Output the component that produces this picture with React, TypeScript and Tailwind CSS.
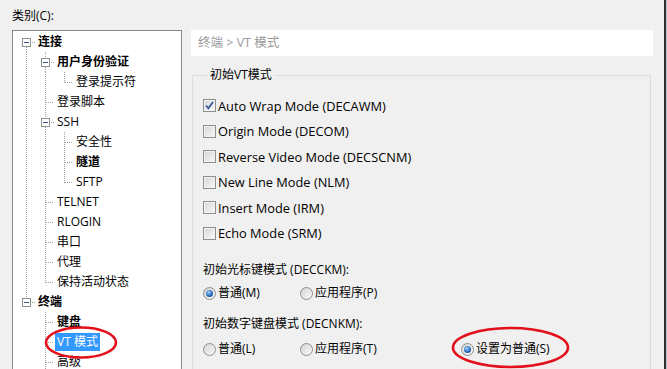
import React from 'react';

const FONT = { fontFamily: '"Open Sans", "Noto Sans CJK SC", sans-serif' };

type Kind = 'box' | 'tee' | 'elbow';

interface TreeNode {
  label: string;
  level: number;
  kind: Kind;
  guides: boolean[];
  up?: boolean;
  down?: boolean;
  bold?: boolean;
  selected?: boolean;
}

const nodes: TreeNode[] = [
  { label: '连接', level: 0, kind: 'box', guides: [], down: true, bold: true },
  { label: '用户身份验证', level: 1, kind: 'box', guides: [true], up: true, down: true, bold: true },
  { label: '登录提示符', level: 2, kind: 'elbow', guides: [true, true] },
  { label: '登录脚本', level: 1, kind: 'tee', guides: [true] },
  { label: 'SSH', level: 1, kind: 'box', guides: [true], up: true, down: true },
  { label: '安全性', level: 2, kind: 'tee', guides: [true, true] },
  { label: '隧道', level: 2, kind: 'tee', guides: [true, true], bold: true },
  { label: 'SFTP', level: 2, kind: 'elbow', guides: [true, true] },
  { label: 'TELNET', level: 1, kind: 'tee', guides: [true] },
  { label: 'RLOGIN', level: 1, kind: 'tee', guides: [true] },
  { label: '串口', level: 1, kind: 'tee', guides: [true] },
  { label: '代理', level: 1, kind: 'tee', guides: [true] },
  { label: '保持活动状态', level: 1, kind: 'elbow', guides: [true] },
  { label: '终端', level: 0, kind: 'box', guides: [], up: true, bold: true },
  { label: '键盘', level: 1, kind: 'tee', guides: [false], bold: true },
  { label: 'VT 模式', level: 1, kind: 'tee', guides: [false], selected: true },
  { label: '高级', level: 1, kind: 'tee', guides: [false] },
];

const DOT = '#a0a0a0';

function Cell({ kind, guide, up, down }: { kind?: Kind; guide?: boolean; up?: boolean; down?: boolean }) {
  return (
    <svg width="19" height="20" className="shrink-0" shapeRendering="crispEdges">
      {guide && <line x1="9.5" y1="0" x2="9.5" y2="20" stroke={DOT} strokeDasharray="1 1" />}
      {kind === 'tee' && <line x1="9.5" y1="0" x2="9.5" y2="20" stroke={DOT} strokeDasharray="1 1" />}
      {kind === 'elbow' && <line x1="9.5" y1="0" x2="9.5" y2="11" stroke={DOT} strokeDasharray="1 1" />}
      {(kind === 'tee' || kind === 'elbow') && (
        <line x1="10" y1="10.5" x2="18" y2="10.5" stroke={DOT} strokeDasharray="1 1" />
      )}
      {kind === 'box' && (
        <>
          {up && <line x1="9.5" y1="0" x2="9.5" y2="6" stroke={DOT} strokeDasharray="1 1" />}
          {down && <line x1="9.5" y1="15" x2="9.5" y2="20" stroke={DOT} strokeDasharray="1 1" />}
          <line x1="15" y1="10.5" x2="18" y2="10.5" stroke={DOT} strokeDasharray="1 1" />
          <rect x="5.5" y="6.5" width="8" height="8" fill="#fff" stroke="#919191" />
          <line x1="7" y1="10.5" x2="12" y2="10.5" stroke="#3c4f7c" />
        </>
      )}
    </svg>
  );
}

function TreeRow({ n }: { n: TreeNode }) {
  return (
    <div className="flex h-[20px] items-center">
      {n.guides.map((g, i) => (
        <Cell key={i} guide={g} />
      ))}
      <Cell kind={n.kind} up={n.up} down={n.down} />
      <span
        className={`px-[2px] leading-[18px] text-[12px] whitespace-nowrap ${
          n.bold ? 'font-bold' : ''
        } ${n.selected ? 'bg-[#3399ff] text-white' : 'text-black'}`}
      >
        {n.label}
      </span>
    </div>
  );
}

function Checkbox({ checked, label }: { checked?: boolean; label: string }) {
  return (
    <div className="flex h-[25.5px] items-center">
      <div className="w-[13px] h-[13px] border border-[#8e8f8f] bg-gradient-to-br from-[#d6d6d6] to-[#f8f8f8] shadow-[inset_0_0_0_1px_#f2f2f2] flex items-center justify-center">
        {checked && (
          <svg width="11" height="11" viewBox="0 0 11 11">
            <path d="M2 5.5 L4.4 8.2 L9 2" fill="none" stroke="#3a5a9c" strokeWidth="1.8" />
          </svg>
        )}
      </div>
      <span className="ml-[2px] text-[12.8px] leading-[16px] text-black whitespace-nowrap">{label}</span>
    </div>
  );
}

function Radio({ checked, label, width }: { checked?: boolean; label: string; width?: string }) {
  return (
    <div className={`flex items-center ${width ?? ''}`}>
      <div className="w-[13px] h-[13px] rounded-full border border-[#8e8f8f] bg-gradient-to-br from-[#d4d4d4] to-[#fafafa] flex items-center justify-center">
        {checked && (
          <div className="w-[7px] h-[7px] rounded-full bg-[radial-gradient(circle_at_40%_35%,#a6d4ff,#1f62b6_60%,#0c3c78)]" />
        )}
      </div>
      <span className="ml-[2px] text-[12px] leading-[16px] text-black whitespace-nowrap">{label}</span>
    </div>
  );
}

export default function App() {
  return (
    <div className="relative w-[667px] h-[369px] overflow-hidden bg-[#f0f0f0] flex" style={FONT}>
      <div className="w-[664px] flex flex-col">
        <div className="h-[30px] shrink-0 pl-[12px] pt-[7px] text-[12px] leading-[18px] text-black">类别(C):</div>
        <div className="flex shrink-0">
          <div className="ml-[12px] w-[170px] h-[360px] shrink-0 border border-[#828790] bg-white pl-[4px] pt-[1px]">
            {nodes.map((n) => (
              <TreeRow key={n.label} n={n} />
            ))}
          </div>

          <div className="ml-[9px] w-[462px] shrink-0 flex flex-col">
            <div className="h-[26px] shrink-0 bg-white pl-[7px] flex items-center text-[12.5px] text-[#9a9a9a]">
              终端 &gt; VT 模式
            </div>
            <fieldset className="mt-[11px] ml-[1px] w-[459px] h-[320px] shrink-0 border border-[#d5dfe5] pl-[10px] pt-[10px]">
              <legend className="ml-[5px] px-[2px] text-[12px] leading-[16px] text-black">初始VT模式</legend>
              <Checkbox checked label="Auto Wrap Mode (DECAWM)" />
              <Checkbox label="Origin Mode (DECOM)" />
              <Checkbox label="Reverse Video Mode (DECSCNM)" />
              <Checkbox label="New Line Mode (NLM)" />
              <Checkbox label="Insert Mode (IRM)" />
              <Checkbox label="Echo Mode (SRM)" />

              <div className="mt-[14px] h-[20px] flex items-center text-[12px] text-black">
                初始光标键模式 (DECCKM):
              </div>
              <div className="mt-[3px] h-[20px] flex items-center">
                <Radio checked label="普通(M)" width="w-[97px]" />
                <Radio label="应用程序(P)" />
              </div>
              <div className="mt-[11px] h-[20px] flex items-center text-[12px] text-black">
                初始数字键盘模式 (DECNKM):
              </div>
              <div className="mt-[5px] h-[20px] flex items-center">
                <Radio label="普通(L)" width="w-[97px]" />
                <Radio label="应用程序(T)" width="w-[161px]" />
                <Radio checked label="设置为普通(S)" />
              </div>
            </fieldset>
          </div>
        </div>
      </div>
      <div className="w-[2px] bg-[#2e2e2e]" />
      <div className="w-[1px] bg-[#b8c8d8]" />

      <svg className="absolute left-0 top-0 pointer-events-none" width="667" height="369">
        <ellipse cx="81" cy="342.5" rx="35" ry="15" fill="none" stroke="#e3101c" strokeWidth="2.6" />
        <ellipse cx="510.5" cy="347.5" rx="57.5" ry="19.5" fill="none" stroke="#e3101c" strokeWidth="2.6" />
      </svg>
    </div>
  );
}
